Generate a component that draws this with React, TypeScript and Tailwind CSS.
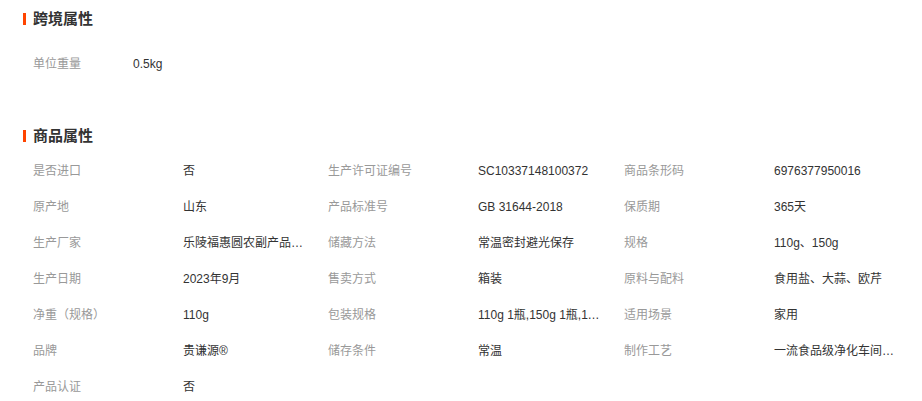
import React from "react";

const rows: [string, string][] = [
  ["是否进口", "否"],
  ["生产许可证编号", "SC10337148100372"],
  ["商品条形码", "6976377950016"],
  ["原产地", "山东"],
  ["产品标准号", "GB 31644-2018"],
  ["保质期", "365天"],
  ["生产厂家", "乐陵福惠圆农副产品有限公司"],
  ["储藏方法", "常温密封避光保存"],
  ["规格", "110g、150g"],
  ["生产日期", "2023年9月"],
  ["售卖方式", "箱装"],
  ["原料与配料", "食用盐、大蒜、欧芹"],
  ["净重（规格）", "110g"],
  ["包装规格", "110g 1瓶,150g 1瓶,110g 2瓶"],
  ["适用场景", "家用"],
  ["品牌", "贵谦源®"],
  ["储存条件", "常温"],
  ["制作工艺", "一流食品级净化车间生产"],
  ["产品认证", "否"],
];

function Title({ text }: { text: string }) {
  return (
    <div className="flex h-[20px] items-center">
      <span className="block h-[12px] w-[3px] bg-[#ff4400]" />
      <span className="ml-[7px] text-[15px] font-bold leading-[20px] text-[#333]">{text}</span>
    </div>
  );
}

function Cell({ label, value }: { label: string; value: string }) {
  return (
    <div className="flex h-[36px] items-center text-[12px]">
      <div className="w-[150px] shrink-0 text-[#999]">{label}</div>
      <div className="w-[125px] truncate text-[#333]">{value}</div>
    </div>
  );
}

export default function App() {
  return (
    <div
      className="h-[401px] w-[922px] overflow-hidden bg-white pl-[23px] pt-[9px]"
      style={{ fontFamily: '"Liberation Sans", "Noto Sans CJK SC", sans-serif' }}
    >
      <Title text="跨境属性" />
      <div className="mt-[17px] flex h-[36px] items-center pl-[10px] text-[12px]">
        <div className="w-[100px] text-[#999]">单位重量</div>
        <div className="text-[#333]">0.5kg</div>
      </div>
      <div className="mt-[44px]">
        <Title text="商品属性" />
      </div>
      <div className="mt-[7px] grid grid-cols-[295px_296px_300px] pl-[10px]">
        {rows.map(([l, v], i) => (
          <Cell key={i} label={l} value={v} />
        ))}
      </div>
    </div>
  );
}
